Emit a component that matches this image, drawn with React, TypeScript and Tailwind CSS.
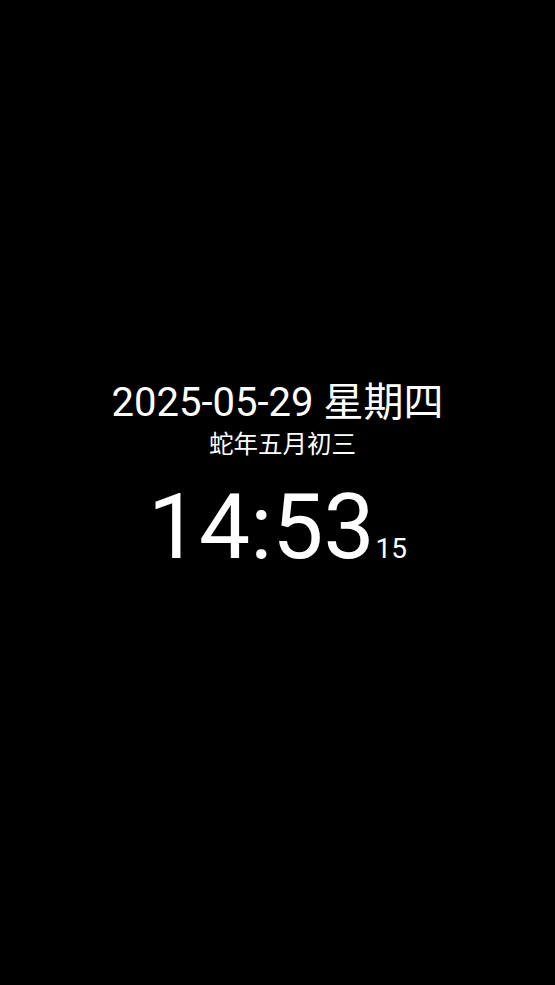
import React from 'react';

export default function App() {
  return (
    <div className="w-full min-h-screen bg-black text-white flex flex-col items-center pt-[379px] font-['Roboto','Noto_Sans_CJK_SC',sans-serif]">
      {/* Date */}
      <div className="text-[40px] leading-[48px]">2025-05-29 星期四</div>
      {/* Lunar */}
      <div className="text-[24.5px] leading-[32px] mt-[2px] ml-[10px]">蛇年五月初三</div>
      {/* Time */}
      <div className="flex items-baseline mt-[21px]">
        <span className="text-[91px] leading-[90px]">14:53</span>
        <span className="text-[28px] leading-[28px] ml-[1px]">15</span>
      </div>
    </div>
  );
}
